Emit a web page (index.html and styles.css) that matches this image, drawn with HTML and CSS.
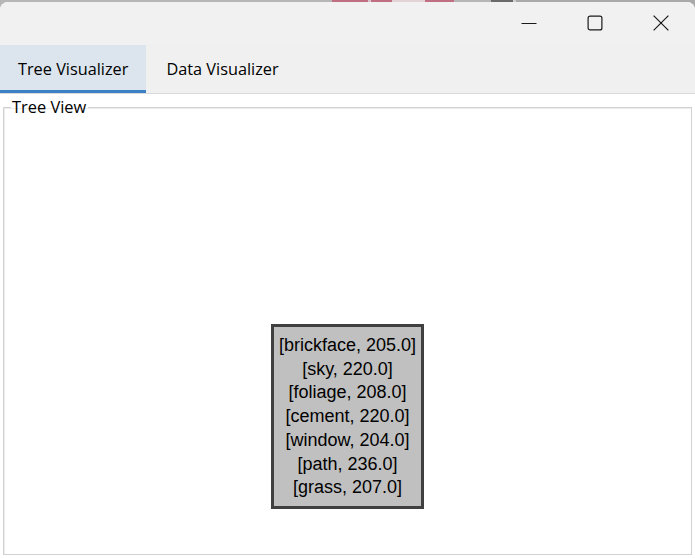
FILE: index.html
```html
<!DOCTYPE html>
<html>
<head>
<meta charset="utf-8">
<title>Tree Visualizer</title>
<link rel="stylesheet" href="styles.css">
</head>
<body>
<div class="window">
  <div class="titlebar">
    <div class="ctl">
      <svg width="16" height="16" viewBox="0 0 16 16"><path d="M0.5 8.5 H15.5" stroke="#1b1b1b" stroke-width="1.1" fill="none"/></svg>
    </div>
    <div class="ctl">
      <svg width="16" height="16" viewBox="0 0 16 16"><rect x="1.1" y="1.1" width="13.8" height="13.8" rx="2" stroke="#1b1b1b" stroke-width="1.2" fill="none"/></svg>
    </div>
    <div class="ctl">
      <svg width="16" height="16" viewBox="0 0 16 16"><path d="M0.6 0.6 L15.4 15.4 M15.4 0.6 L0.6 15.4" stroke="#1b1b1b" stroke-width="1.2" fill="none"/></svg>
    </div>
  </div>
  <div class="tabs">
    <div class="tab active">Tree Visualizer</div>
    <div class="tab">Data Visualizer</div>
  </div>
  <div class="content">
    <fieldset class="group">
      <legend class="group-label">Tree View</legend>
      <div class="canvas">
        <div class="node">
          <div>[brickface, 205.0]</div>
          <div>[sky, 220.0]</div>
          <div>[foliage, 208.0]</div>
          <div>[cement, 220.0]</div>
          <div>[window, 204.0]</div>
          <div>[path, 236.0]</div>
          <div>[grass, 207.0]</div>
        </div>
      </div>
    </fieldset>
  </div>
</div>
</body>
</html>
```
FILE: styles.css
```css
html, body {
  margin: 0;
  padding: 0;
}
body {
  width: 695px;
  height: 558px;
  overflow: hidden;
  background: linear-gradient(to right,
    #b6b6b6 0 332px,
    #c06f82 332px 368px,
    #d9c2c8 368px 371px,
    #c06f82 371px 392px,
    #e2d3d7 392px 425px,
    #c06f82 425px 454px,
    #b6b6b6 454px 491px,
    #6b6b6b 491px 513px,
    #cfcfcf 513px 516px,
    #a9a9a9 516px);
  font-family: "Open Sans", "Noto Sans", sans-serif;
}
.window {
  margin-top: 2px;
  height: 556px;
  background: #ffffff;
  border-radius: 8px 8px 0 0;
  overflow: hidden;
  display: flex;
  flex-direction: column;
}
.titlebar {
  height: 43px;
  background: #f1f1f1;
  display: flex;
  justify-content: flex-end;
  align-items: flex-start;
  padding-right: 1px;
}
.ctl {
  width: 66px;
  height: 41px;
  display: flex;
  align-items: center;
  justify-content: center;
}
.ctl svg {
  display: block;
}
.tabs {
  height: 48px;
  background: #f0f0f0;
  border-bottom: 1px solid #dadada;
  display: flex;
  gap: 2px;
}
.tab {
  padding: 0 18px;
  height: 48px;
  box-sizing: border-box;
  display: flex;
  align-items: center;
  padding-top: 2px;
  font-size: 16.3px;
  color: #000;
  border-bottom: 3px solid transparent;
}
.tab.active {
  background: #dce5ee;
  border-bottom-color: #3c80c6;
}
.content {
  flex: 1;
  background: #ffffff;
  display: flex;
  flex-direction: column;
}
.group {
  flex: 1;
  margin: 4px 3px 3px 3px;
  padding: 0;
  border: 1px solid #d2d2d2;
  box-shadow: inset 1px 1px 0 #ececec;
  min-width: 0;
  display: flex;
  flex-direction: column;
}
.group-label {
  margin-left: 7px;
  padding: 0 2px 0 1px;
  font-size: 16.4px;
  line-height: 18px;
  color: #000;
}
.canvas {
  flex: 1;
  display: flex;
  flex-direction: column;
  align-items: center;
  padding-top: 208px;
}
.node {
  background: #c0c0c0;
  border: 3px solid #404040;
  padding: 7px 4.5px 6px;
  font-family: "Liberation Sans", Arial, sans-serif;
  font-size: 18px;
  line-height: 23.7px;
  text-align: center;
  color: #000;
  white-space: nowrap;
}
```
